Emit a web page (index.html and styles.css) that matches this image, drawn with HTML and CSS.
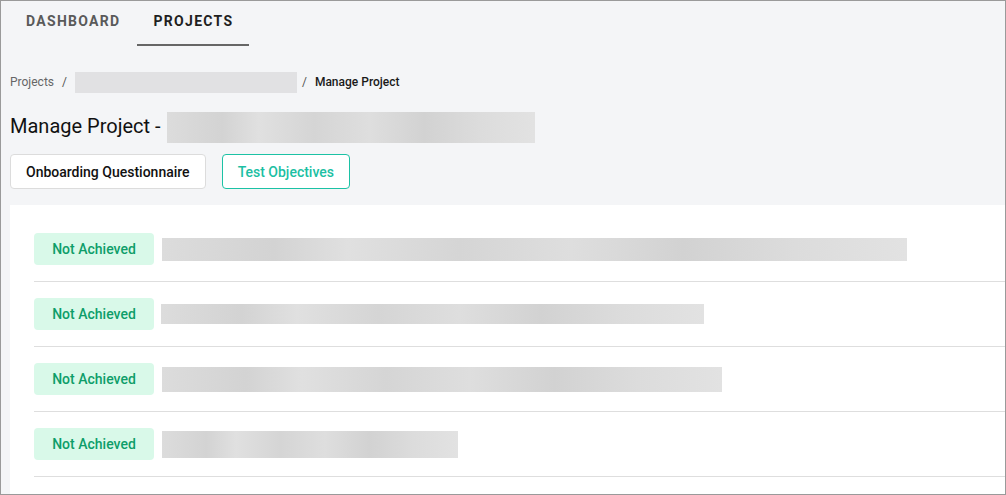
FILE: index.html
```html
<!DOCTYPE html>
<html>
<head>
<meta charset="utf-8">
<link rel="stylesheet" href="styles.css">
</head>
<body>
<div class="frame">
  <nav class="tabs">
    <div class="tab">DASHBOARD</div>
    <div class="tab active">PROJECTS</div>
  </nav>
  <div class="crumbs">
    <span class="crumb">Projects</span>
    <span class="sep">/</span>
    <span class="blur crumb-blur"></span>
    <span class="sep sep-last">/</span>
    <span class="crumb current">Manage Project</span>
  </div>
  <div class="title-row">
    <h1 class="title">Manage Project -</h1>
    <span class="blur title-blur"></span>
  </div>
  <div class="buttons">
    <button class="btn">Onboarding Questionnaire</button>
    <button class="btn btn-teal">Test Objectives</button>
  </div>
  <div class="panel">
    <div class="row">
      <span class="badge">Not Achieved</span>
      <span class="blur bar" style="width:745px;height:23px"></span>
    </div>
    <div class="row">
      <span class="badge">Not Achieved</span>
      <span class="blur bar" style="width:543px;height:20px;margin-left:-1px"></span>
    </div>
    <div class="row">
      <span class="badge">Not Achieved</span>
      <span class="blur bar" style="width:560px;height:25px"></span>
    </div>
    <div class="row">
      <span class="badge">Not Achieved</span>
      <span class="blur bar" style="width:296px;height:27px"></span>
    </div>
  </div>
</div>
</body>
</html>
```

FILE: styles.css
```css
* { box-sizing: border-box; }
html, body { margin: 0; padding: 0; }
body {
  font-family: Roboto, "Liberation Sans", sans-serif;
  background: #f4f5f7;
}
.frame {
  width: 1006px;
  height: 495px;
  border: 1px solid #9a9a9a;
  background: #f4f5f7;
  overflow: hidden;
  display: flex;
  flex-direction: column;
}
.tabs {
  display: flex;
  gap: 1px;
  padding-left: 9px;
  height: 45px;
}
.tab {
  padding: 0 16px;
  font-size: 14px;
  font-weight: 700;
  letter-spacing: 1.3px;
  color: #5a5a5a;
  line-height: 41px;
  height: 45px;
  border-bottom: 2px solid transparent;
}
.tab.active {
  color: #1f1f1f;
  border-bottom-color: #666;
}
.crumbs {
  display: flex;
  align-items: center;
  margin-top: 26px;
  padding-left: 9px;
  height: 20px;
  font-size: 12px;
  color: #666;
}
.sep { margin: 0 8px; color: #555; }
.sep-last { margin-left: 5px; }
.crumb.current { color: #1a1a1a; font-weight: 500; }
.blur {
  display: inline-block;
  background: linear-gradient(90deg, #dcdcdc 0%, #d3d3d3 15%, #e0e0e0 25%, #d5d5d5 40%, #dedede 55%, #d2d2d2 70%, #dcdcdc 85%, #e2e2e2 100%);
  filter: blur(0.5px);
}
.crumb-blur { width: 222px; height: 21px; background: #e1e1e3; }
.title-row {
  display: flex;
  align-items: center;
  margin-top: 19px;
  padding-left: 9px;
  height: 32px;
}
.title {
  margin: 0 6px 0 0;
  font-size: 20px;
  font-weight: 400;
  color: #111;
  position: relative;
  top: -1px;
}
.title-blur { width: 368px; height: 31px; }
.buttons {
  display: flex;
  gap: 16px;
  padding-left: 9px;
  margin-top: 11px;
}
.btn {
  font-family: Roboto, "Liberation Sans", sans-serif;
  height: 35px;
  padding: 0 15px;
  background: #fff;
  border: 1px solid #dcdcdc;
  border-radius: 4px;
  font-size: 14px;
  font-weight: 500;
  color: #111;
}
.btn-teal {
  border-color: #1cc2a5;
  color: #1cbfa3;
}
.panel {
  margin-top: 16px;
  margin-left: 9px;
  background: #fff;
  flex: 1;
  padding: 12px 0 0 24px;
}
.row {
  display: flex;
  align-items: center;
  gap: 8px;
  padding: 16px 0;
  border-bottom: 1px solid #dedede;
}
.badge {
  flex: none;
  width: 120px;
  height: 32px;
  border-radius: 4px;
  background: #d9f9e9;
  color: #0e9e69;
  font-size: 14px;
  font-weight: 500;
  display: flex;
  align-items: center;
  justify-content: center;
}
```
